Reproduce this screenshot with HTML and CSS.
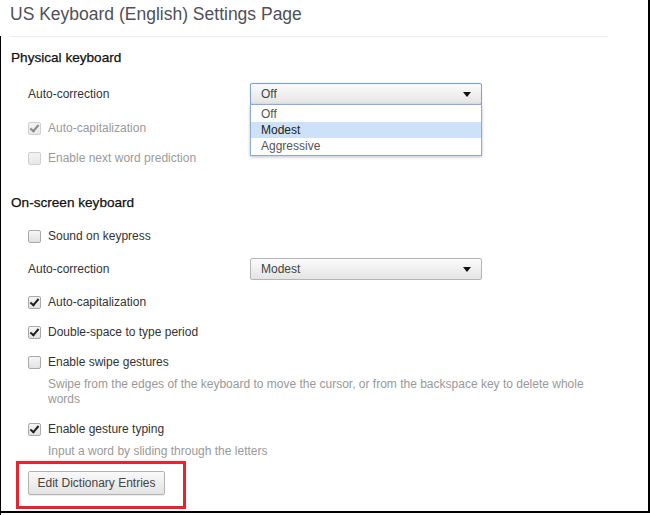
FILE: index.html
```
<html>

<head>
  <meta name="viewport" content="width=device-width, initial-scale=1.0">
  <link rel="stylesheet" href="styles.css">
</head>

<body>
  <div class="frame">
    <div class="head">US Keyboard (English) Settings Page</div>
    <div class="content">
      <div class="rule"></div>

      <h3 class="section">Physical keyboard</h3>
      <div class="row select_row first">
        <span class="label">Auto-correction</span>
        <div class="select_wrap">
          <div class="select open">Off<span class="arrow"></span></div>
          <ul class="dropdown">
            <li>Off</li>
            <li class="active">Modest</li>
            <li>Aggressive</li>
          </ul>
        </div>
      </div>
      <div class="row check_row disabled gap13">
        <span class="box checked"></span>Auto-capitalization
      </div>
      <div class="row check_row disabled">
        <span class="box"></span>Enable next word prediction
      </div>

      <h3 class="section second">On-screen keyboard</h3>
      <div class="row check_row gap13">
        <span class="box"></span>Sound on keypress
      </div>
      <div class="row select_row">
        <span class="label">Auto-correction</span>
        <div class="select_wrap">
          <div class="select">Modest<span class="arrow"></span></div>
        </div>
      </div>
      <div class="row check_row gap12">
        <span class="box checked"></span>Auto-capitalization
      </div>
      <div class="row check_row">
        <span class="box checked"></span>Double-space to type period
      </div>
      <div class="row check_row">
        <span class="box"></span>Enable swipe gestures
      </div>
      <div class="desc">Swipe from the edges of the keyboard to move the cursor, or from the backspace key to delete whole words</div>
      <div class="row check_row gap12">
        <span class="box checked"></span>Enable gesture typing
      </div>
      <div class="desc">Input a word by sliding through the letters</div>

      <div class="highlight">
        <button class="button">Edit Dictionary Entries</button>
      </div>
    </div>
  </div>
</body>

</html>
```

FILE: styles.css
```
body {
  margin: 0px;
  font-family: "Liberation Sans", Arial, sans-serif;
  font-size: 12px;
  color: #333;
  background: white;
}

.frame {
  width: 650px;
  height: 513px;
  border-right: 2px solid #000;
  border-bottom: 2px solid #000;
  box-sizing: border-box;
}

.head {
  height: 30px;
  line-height: 29px;
  padding-left: 10px;
  font-size: 17.5px;
  color: #4f5059;
}

.content {
  height: 481px;
  border-left: 1px solid #000;
  padding-left: 9px;
  box-sizing: border-box;
}

.rule {
  width: 598px;
  height: 1px;
  margin-top: 6px;
  background: #ececec;
}

.section {
  margin: 11px 0 0 1px;
  height: 20px;
  line-height: 20px;
  font-size: 13.6px;
  font-weight: normal;
  color: #111;
  -webkit-text-stroke: 0.25px #111;
}

.section.second {
  margin-top: 25px;
}

.row {
  display: flex;
  align-items: center;
  padding-left: 18px;
}

.select_row {
  height: 22px;
  margin-top: 12px;
}

.select_row.first {
  margin-top: 15px;
}

.label {
  width: 222px;
}

.select_wrap {
  position: relative;
}

.select {
  width: 232px;
  height: 22px;
  line-height: 21px;
  padding-left: 10px;
  box-sizing: border-box;
  border: 1px solid #b5b5b5;
  border-radius: 2px;
  background: linear-gradient(#fbfbfb, #e4e4e4);
  color: #444;
  position: relative;
}

.select.open {
  border-color: #7d9fd4;
  box-shadow: 0 0 1px #9fbbe6;
}

.arrow {
  position: absolute;
  right: 10px;
  top: 8px;
  border-left: 4px solid transparent;
  border-right: 4px solid transparent;
  border-top: 5px solid #111;
}

.dropdown {
  position: absolute;
  top: 21px;
  left: 0px;
  width: 232px;
  margin: 0;
  padding: 1px 0;
  list-style-type: none;
  box-sizing: border-box;
  border: 1px solid #8eaad8;
  background: white;
  box-shadow: 0 1px 3px rgba(0, 0, 0, 0.25);
  z-index: 2;
}

.dropdown li {
  height: 16px;
  line-height: 17px;
  padding-left: 10px;
  color: #555;
}

.dropdown li.active {
  background: #cde2f8;
  color: #222;
}

.check_row {
  height: 20px;
  margin-top: 10px;
  line-height: 21px;
}

.gap13 {
  margin-top: 13px;
}

.gap12 {
  margin-top: 12px;
}

.box {
  width: 13px;
  height: 13px;
  margin-right: 7px;
  box-sizing: border-box;
  border: 1px solid #a9a9a9;
  border-radius: 2px;
  background: linear-gradient(#f6f6f6, #e2e2e2);
  position: relative;
}

.box.checked::after {
  content: "";
  position: absolute;
  left: 3px;
  top: 0px;
  width: 3px;
  height: 7px;
  border-right: 2px solid #222;
  border-bottom: 2px solid #222;
  transform: rotate(40deg);
}

.disabled {
  color: #9a9a9a;
}

.disabled .box {
  border-color: #cfcfcf;
  background: linear-gradient(#f4f4f4, #e8e8e8);
}

.disabled .box.checked::after {
  border-color: #888;
}

.desc {
  margin-top: 5px;
  padding-left: 38px;
  width: 560px;
  line-height: 15px;
  color: #999;
}

.highlight {
  display: inline-block;
  margin: 2px 0 0 6px;
  padding: 7px 18px 11px 9px;
  border: 3px solid #e8232c;
}

.button {
  height: 24px;
  width: 137px;
  padding: 0;
  font-family: "Liberation Sans", Arial, sans-serif;
  font-size: 12px;
  color: #444;
  border: 1px solid #b3b3b3;
  border-radius: 2px;
  background: linear-gradient(#f9f9f9, #e3e3e3);
  box-shadow: 0 1px 1px rgba(0, 0, 0, 0.08);
}
```
